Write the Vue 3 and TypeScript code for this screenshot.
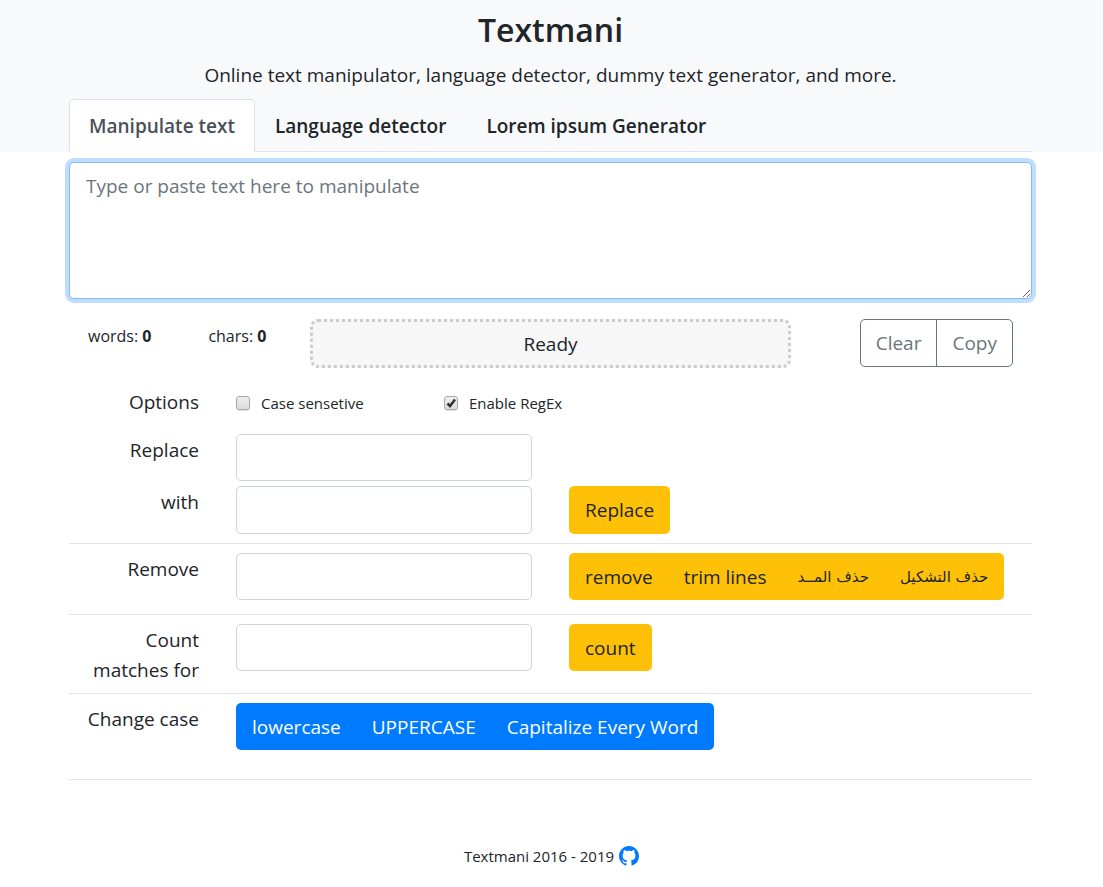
<script setup lang="ts">
import { computed, ref } from 'vue'

const tabs = ['Manipulate text', 'Language detector', 'Lorem ipsum Generator']
const activeTab = ref(0)

const text = ref('')
const status = ref('Ready')
const caseSensitive = ref(false)
const useRegex = ref(true)
const findText = ref('')
const replaceWith = ref('')
const removeText = ref('')
const countText = ref('')

const words = computed(() => text.value.split(/\s+/).filter(Boolean).length)
const chars = computed(() => text.value.length)

function pattern(source: string): RegExp {
  const body = useRegex.value ? source : source.replace(/[.*+?^${}()|[\]\\]/g, '\\$&')
  return new RegExp(body, caseSensitive.value ? 'g' : 'gi')
}

function substitute(source: string, replacement: string) {
  if (!source) return
  try {
    text.value = text.value.replace(pattern(source), replacement)
    status.value = 'Done'
  } catch {
    status.value = 'Invalid expression'
  }
}

function trimLines() {
  text.value = text.value.split('\n').map((line) => line.trim()).join('\n')
}

function countMatches() {
  if (!countText.value) return
  try {
    status.value = `${(text.value.match(pattern(countText.value)) ?? []).length} matches`
  } catch {
    status.value = 'Invalid expression'
  }
}

function capitalize() {
  text.value = text.value.replace(/\S+/g, (w) => w[0].toUpperCase() + w.slice(1).toLowerCase())
}

function copy() {
  navigator.clipboard?.writeText(text.value)
}
</script>

<template>
  <div class="page">
    <header class="top">
      <h1>Textmani</h1>
      <p class="tagline">Online text manipulator, language detector, dummy text generator, and more.</p>
      <nav class="tabs">
        <a
          v-for="(tab, i) in tabs"
          :key="tab"
          href="#"
          class="tab"
          :class="{ active: i === activeTab }"
          @click.prevent="activeTab = i"
        >{{ tab }}</a>
      </nav>
    </header>

    <main class="content">
      <textarea
        v-model="text"
        class="editor"
        aria-label="Text"
        placeholder="Type or paste text here to manipulate"
      ></textarea>

      <div class="info">
        <div class="stat">words: <b>{{ words }}</b></div>
        <div class="stat">chars: <b>{{ chars }}</b></div>
        <div class="status" role="status">{{ status }}</div>
        <div class="group outline">
          <button type="button" @click="text = ''">Clear</button>
          <button type="button" @click="copy">Copy</button>
        </div>
      </div>

      <div class="row options">
        <span class="label">Options</span>
        <div class="checks">
          <label class="check">
            <span class="box">
              <input v-model="caseSensitive" type="checkbox">
              <svg v-if="caseSensitive" viewBox="0 0 14 14"><path d="M3.5 7.5 6 10l5-6.5" /></svg>
            </span>
            Case sensetive
          </label>
          <label class="check">
            <span class="box">
              <input v-model="useRegex" type="checkbox">
              <svg v-if="useRegex" viewBox="0 0 14 14"><path d="M3.5 7.5 6 10l5-6.5" /></svg>
            </span>
            Enable RegEx
          </label>
        </div>
      </div>

      <div class="row">
        <label class="label" for="find">Replace</label>
        <input id="find" v-model="findText" class="field" type="text">
      </div>
      <div class="row with">
        <label class="label" for="replacement">with</label>
        <input id="replacement" v-model="replaceWith" class="field" type="text">
        <div class="group">
          <button type="button" @click="substitute(findText, replaceWith)">Replace</button>
        </div>
      </div>
      <hr>
      <div class="row remove">
        <label class="label" for="remove">Remove</label>
        <input id="remove" v-model="removeText" class="field" type="text">
        <div class="group">
          <button type="button" @click="substitute(removeText, '')">remove</button>
          <button type="button" @click="trimLines">trim lines</button>
          <button type="button" class="arabic" lang="ar" @click="text = text.replace(/\u0640/g, '')">حذف المــد</button>
          <button type="button" class="arabic" lang="ar" @click="text = text.replace(/[\u064B-\u0652]/g, '')">حذف التشكيل</button>
        </div>
      </div>
      <hr>
      <div class="row count">
        <label class="label" for="count">Count matches for</label>
        <input id="count" v-model="countText" class="field" type="text">
        <div class="group">
          <button type="button" @click="countMatches">count</button>
        </div>
      </div>
      <hr>
      <div class="row case">
        <span class="label">Change case</span>
        <div class="group primary">
          <button type="button" @click="text = text.toLowerCase()">lowercase</button>
          <button type="button" @click="text = text.toUpperCase()">UPPERCASE</button>
          <button type="button" @click="capitalize">Capitalize Every Word</button>
        </div>
      </div>
      <hr>
    </main>

    <footer class="footer">
      <span>Textmani 2016 - 2019</span>
      <a href="#" aria-label="GitHub">
        <svg viewBox="0 0 16 16" width="20" height="20">
          <path fill="currentColor" fill-rule="evenodd" d="M8 0C3.58 0 0 3.58 0 8c0 3.54 2.29 6.53 5.47 7.59.4.07.55-.17.55-.38 0-.19-.01-.82-.01-1.49-2.01.37-2.53-.49-2.69-.94-.09-.23-.48-.94-.82-1.13-.28-.15-.68-.52-.01-.53.63-.01 1.08.58 1.23.82.72 1.21 1.87.87 2.33.66.07-.52.28-.87.51-1.07-1.78-.2-3.64-.89-3.64-3.95 0-.87.31-1.59.82-2.15-.08-.2-.36-1.02.08-2.12 0 0 .67-.21 2.2.82.64-.18 1.32-.27 2-.27s1.36.09 2 .27c1.53-1.04 2.2-.82 2.2-.82.44 1.1.16 1.92.08 2.12.51.56.82 1.27.82 2.15 0 3.07-1.87 3.75-3.65 3.95.29.25.54.73.54 1.48 0 1.07-.01 1.93-.01 2.2 0 .21.15.46.55.38A8.01 8.01 0 0 0 16 8c0-4.42-3.58-8-8-8z" />
        </svg>
      </a>
    </footer>
  </div>
</template>

<style>
body {
  background: #fff;
}
</style>

<style scoped>
.page {
  color: #212529;
  font-family: "Open Sans", "Noto Sans", sans-serif;
  font-size: 19px;
  font-weight: 400;
  line-height: 30px;
}

.page *,
.page *::before {
  box-sizing: border-box;
}

.top {
  padding: 8px 71px 0 69px;
  background: #f8f9fa;
  text-align: center;
}

h1 {
  margin: 0 0 8px;
  font-size: 32px;
  font-weight: 600;
  line-height: 44px;
}

.tagline {
  margin: 0 0 9px;
}

.tabs {
  display: flex;
  flex-wrap: wrap;
  border-bottom: 1px solid #dee2e6;
}

.tab {
  margin-bottom: -1px;
  padding: 12px 19px 11px;
  border: 1px solid transparent;
  border-radius: 5px 5px 0 0;
  color: #212529;
  font-weight: 600;
  line-height: 28px;
  text-decoration: none;
}

.tab.active {
  border-color: #dee2e6 #dee2e6 #fff;
  background: #fff;
  color: #495057;
}

.content {
  padding: 10px 71px 0 69px;
}

.editor {
  display: block;
  width: 100%;
  height: 137px;
  padding: 8px 16px;
  border: 1px solid #80bdff;
  border-radius: 5px;
  outline: 0;
  box-shadow: 0 0 0 4px #bfdeff;
  color: #495057;
  font: inherit;
  resize: vertical;
}

.editor::placeholder {
  color: #6c757d;
}

.info {
  display: grid;
  grid-template-columns: 1fr 1fr 4fr 2fr;
  margin-top: 20px;
}

.stat {
  padding: 2px 0 0 19px;
  font-size: 16px;
}

.stat b {
  font-weight: 700;
}

.status {
  height: 49px;
  border: 3px dotted #ccc;
  border-radius: 8px;
  background: #f7f7f7;
  line-height: 44px;
  text-align: center;
}

.info .group {
  justify-self: end;
  margin-right: 19px;
}

.row {
  display: grid;
  grid-template-columns: 130px 296fr 463fr;
  column-gap: 37px;
  align-items: start;
}

.label {
  padding-top: 1px;
  text-align: right;
}

.options {
  margin: 18px 0 16px;
}

.checks {
  display: grid;
  grid-template-columns: 208px 1fr;
  grid-column: 2 / -1;
  padding-top: 2px;
}

.check {
  display: flex;
  align-items: center;
  gap: 11px;
  font-size: 15px;
}

.box {
  display: grid;
}

.box input {
  grid-area: 1 / 1;
  width: 14px;
  height: 14px;
  margin: 0;
  border: 1px solid #aaa;
  border-radius: 3px;
  background: linear-gradient(#eee, #dcdcdc);
  box-shadow: 0 1px 1px #ddd;
  appearance: none;
}

.box svg {
  grid-area: 1 / 1;
  width: 14px;
  height: 14px;
  fill: none;
  stroke: #333;
  stroke-width: 2.5;
  pointer-events: none;
}

.field {
  width: 100%;
  min-width: 0;
  height: 47px;
  padding: 8px 16px;
  border: 1px solid #ced4da;
  border-radius: 5px;
  background: #fff;
  color: #495057;
  font: inherit;
}

.with {
  margin-top: 5px;
}

.with .field {
  height: 48px;
}

hr {
  height: 1px;
  margin: 9px 0;
  border: 0;
  background: #e5e5e5;
}

.remove {
  padding-bottom: 5px;
}

.count + hr {
  margin-top: 8px;
}

.case {
  padding-bottom: 20px;
}

.group {
  display: flex;
  width: max-content;
}

.group button {
  height: 47px;
  padding: 0 16px;
  border: 0;
  background: #ffc107;
  color: #212529;
  font: inherit;
  white-space: nowrap;
}

.group button + button {
  margin-left: -1px;
}

.with .group button {
  height: 48px;
}

.group button:first-child {
  border-radius: 5px 0 0 5px;
}

.group button:last-child {
  border-radius: 0 5px 5px 0;
}

.group button:only-child {
  border-radius: 5px;
}

.group button.arabic {
  font-family: "DejaVu Sans", sans-serif;
  font-size: 15px;
}

.group.primary {
  grid-column: 2 / -1;
}

.group.primary button {
  background: #007bff;
  color: #fff;
}

.group.outline button {
  height: 48px;
  padding: 0 15px;
  border: 1px solid #6c757d;
  background: #fff;
  color: #6c757d;
}

.footer {
  display: flex;
  align-items: center;
  justify-content: center;
  gap: 5px;
  margin-top: 61px;
  padding-bottom: 14px;
  font-size: 15px;
}

.footer a {
  color: #007bff;
}

.footer svg {
  display: block;
}
</style>
